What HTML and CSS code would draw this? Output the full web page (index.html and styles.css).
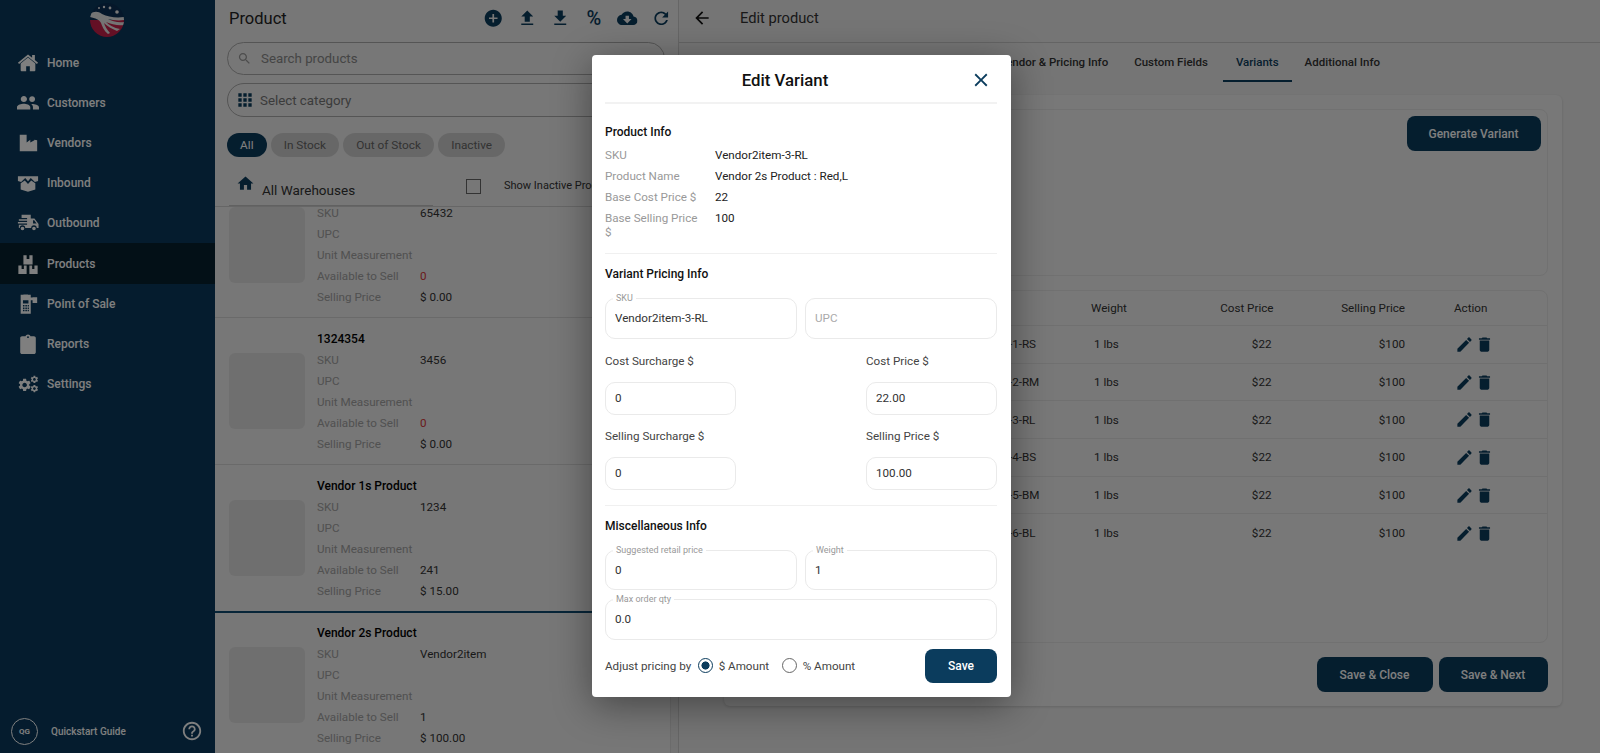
FILE: index.html
```html
<!DOCTYPE html>
<html lang="en">
<head>
<meta charset="utf-8">
<title>Edit product</title>
<link rel="stylesheet" href="styles.css">
</head>
<body>
<svg class="defs" width="0" height="0" aria-hidden="true">
  <symbol id="i-home" viewBox="0 0 24 24"><path d="M12 6 4 12.6V20a1 1 0 0 0 1 1h5v-5.5h4V21h5a1 1 0 0 0 1-1v-7.4zM12 2.6 1 11.6l1.3 1.6L12 5.2l9.7 8 1.3-1.6-3.5-2.9V3.400h-3v2.800z"/></symbol>
  <symbol id="i-people" viewBox="0 0 24 24"><path d="M16.500 11c1.800 0 3.200-1.500 3.200-3.300s-1.400-3.200-3.200-3.200-3.200 1.400-3.200 3.200 1.400 3.300 3.200 3.300zm-9 0c1.900 0 3.400-1.500 3.400-3.300S9.400 4.300 7.500 4.300 4.100 5.800 4.100 7.700 5.600 11 7.500 11zm0 1.800c-2.500 0-7.500 1.200-7.500 3.700V19h14.500v-2.500c0-2.500-4.500-3.700-7-3.700zm9 .2c-.3 0-.7 0-1 .1 1.200.9 1.900 2 1.900 3.400V19H24v-2.500c0-2.300-5-3.500-7.500-3.500z"/></symbol>
  <symbol id="i-factory" viewBox="0 0 24 24"><path d="M3 3h7.500v8.500l4-3v3l4.500-2.500v-.5l3 .4V21H3z"/></symbol>
  <symbol id="i-inbox" viewBox="0 0 24 24"><path d="M1 4.500h22v5.300l-3.500 1-4.500-4.300-3 3.500-3-3.500-4.500 4.300-3.500-1zM4 12.200l4.500-3 3.500 4 3.500-4 4.500 3V19l-8 2.500L4 19z"/></symbol>
  <symbol id="i-truck" viewBox="0 0 24 24"><path d="M5 3h10v4h4l4.500 6v4.500h-2a3 3 0 0 0-6 0H9a3 3 0 0 0-6 0H2V14h9v-1.500H1V11h10V9.500H2V8h9V6.500H5zm1 13a2 2 0 1 1 0 4 2 2 0 0 1 0-4zm12.500 0a2 2 0 1 1 0 4 2 2 0 0 1 0-4zm-1-7v3.500h3.800L18.800 9z"/></symbol>
  <symbol id="i-boxes" viewBox="0 0 24 24"><path d="M7 2.500h3.500v4h3v-4H17v10H7zM1.500 13.500H5v4h2.500v-4h3v9.500h-9zM13.500 13.500h3v4H19v-4h3.500V23h-9z"/></symbol>
  <symbol id="i-pos" viewBox="0 0 24 24"><path d="M4 2h3v-.5h5V2h3v3h2v-.5h5v6.500h-5V8h-2v14.500H4zm2.500 6v3.500h6V8zm0 5v1.700h1.700V13zm2.600 0v1.700h1.700V13zm2.500 0v1.700h1.400V13zm-5.100 2.700v1.700h1.700v-1.700zm2.600 0v1.700h1.700v-1.700zm2.500 0v1.700h1.400v-1.700zm-5.100 2.600V20h1.700v-1.700zm2.600 0V20h1.700v-1.700zm2.500 0V20h1.400v-1.700z" fill-rule="evenodd"/></symbol>
  <symbol id="i-clip" viewBox="0 0 24 24"><path d="M18.500 3.500h-3.800C14.300 2.300 13.300 1.500 12 1.500s-2.300.8-2.700 2H5.500c-1.100 0-2 .9-2 2V21c0 1.100.9 2 2 2h13c1.100 0 2-.9 2-2V5.500c0-1.100-.9-2-2-2zM12 3.500c.5 0 1 .4 1 1s-.5 1-1 1-1-.4-1-1 .5-1 1-1z"/></symbol>
  <symbol id="i-gear" viewBox="0 0 24 24"><path d="M19.140 12.940c.04-.3.06-.61.06-.94 0-.32-.02-.64-.07-.94l2.030-1.580c.18-.14.23-.41.12-.61l-1.920-3.320c-.12-.22-.37-.29-.59-.22l-2.390.96c-.5-.38-1.030-.7-1.620-.94l-.36-2.540c-.04-.24-.24-.41-.48-.41h-3.840c-.24 0-.43.17-.47.41l-.36 2.540c-.59.24-1.130.57-1.620.94l-2.390-.96c-.22-.08-.47 0-.59.22L2.740 8.870c-.12.21-.08.47.12.61l2.030 1.580c-.05.3-.09.63-.09.94s.02.64.07.94l-2.030 1.580c-.18.14-.23.41-.12.61l1.920 3.320c.12.22.37.29.59.22l2.390-.96c.5.38 1.030.7 1.620.94l.36 2.540c.05.24.24.41.48.41h3.840c.24 0 .44-.17.47-.41l.36-2.540c.59-.24 1.130-.56 1.620-.94l2.390.96c.22.08.47 0 .59-.22l1.920-3.320c.12-.22.07-.47-.12-.61l-2.010-1.580zM12 15.600c-1.980 0-3.600-1.620-3.600-3.600s1.620-3.600 3.600-3.600 3.600 1.620 3.600 3.600-1.620 3.600-3.600 3.600z"/></symbol>
  <symbol id="i-gears" viewBox="0 0 36 30"><use href="#i-gear" x="0" y="4" width="25" height="25"/><use href="#i-gear" x="21" y="0" width="15" height="15"/><use href="#i-gear" x="21" y="15" width="15" height="15"/></symbol>
  <symbol id="i-help" viewBox="0 0 24 24"><path d="M11 18h2v-2h-2v2zm1-16C6.480 2 2 6.480 2 12s4.480 10 10 10 10-4.480 10-10S17.520 2 12 2zm0 18c-4.410 0-8-3.590-8-8s3.590-8 8-8 8 3.590 8 8-3.590 8-8 8zm0-14c-2.210 0-4 1.790-4 4h2c0-1.100.9-2 2-2s2 .9 2 2c0 2-3 1.750-3 5h2c0-2.250 3-2.500 3-5 0-2.210-1.790-4-4-4z"/></symbol>
  <symbol id="i-add" viewBox="0 0 24 24"><path d="M12 2C6.480 2 2 6.480 2 12s4.480 10 10 10 10-4.480 10-10S17.520 2 12 2zm5 11h-4v4h-2v-4H7v-2h4V7h2v4h4v2z"/></symbol>
  <symbol id="i-up" viewBox="0 0 24 24"><path d="M9 16h6v-6h4l-7-7-7 7h4zm-4 2h14v2H5z"/></symbol>
  <symbol id="i-down" viewBox="0 0 24 24"><path d="M19 9h-4V3H9v6H5l7 7 7-7zM5 18v2h14v-2H5z"/></symbol>
  <symbol id="i-cloud" viewBox="0 0 24 24"><path d="M19.350 10.040C18.670 6.590 15.640 4 12 4 9.110 4 6.600 5.640 5.350 8.040 2.340 8.360 0 10.910 0 14c0 3.310 2.690 6 6 6h13c2.760 0 5-2.240 5-5 0-2.640-2.050-4.780-4.650-4.960zM17 13l-5 5-5-5h3V9h4v4h3z"/></symbol>
  <symbol id="i-refresh" viewBox="0 0 24 24"><path d="M17.650 6.350C16.200 4.900 14.210 4 12 4c-4.420 0-7.990 3.580-7.990 8s3.570 8 7.990 8c3.730 0 6.840-2.550 7.730-6h-2.080c-.82 2.330-3.040 4-5.650 4-3.310 0-6-2.690-6-6s2.690-6 6-6c1.660 0 3.140.69 4.220 1.780L13 11h7V4l-2.350 2.350z"/></symbol>
  <symbol id="i-search" viewBox="0 0 24 24"><path d="M15.500 14h-.79l-.28-.27C15.410 12.590 16 11.110 16 9.500 16 5.910 13.090 3 9.500 3S3 5.910 3 9.500 5.910 16 9.500 16c1.610 0 3.090-.59 4.230-1.570l.27.28v.79l5 4.990L20.490 19l-4.990-5zm-6 0C7.010 14 5 11.990 5 9.500S7.010 5 9.500 5 14 7.010 14 9.500 11.990 14 9.500 14z"/></symbol>
  <symbol id="i-apps" viewBox="0 0 24 24"><path d="M4 8h4V4H4v4zm6 12h4v-4h-4v4zm-6 0h4v-4H4v4zm0-6h4v-4H4v4zm6 0h4v-4h-4v4zm6-10v4h4V4h-4zm-6 4h4V4h-4v4zm6 6h4v-4h-4v4zm0 6h4v-4h-4v4z"/></symbol>
  <symbol id="i-mhome" viewBox="0 0 24 24"><path d="M10 20v-6h4v6h5v-8h3L12 3 2 12h3v8z"/></symbol>
  <symbol id="i-back" viewBox="0 0 24 24"><path d="M20 11H7.830l5.590-5.590L12 4l-8 8 8 8 1.410-1.410L7.830 13H20v-2z"/></symbol>
  <symbol id="i-close" viewBox="0 0 24 24"><path d="M19 6.410 17.590 5 12 10.590 6.410 5 5 6.410 10.590 12 5 17.590 6.410 19 12 13.410 17.590 19 19 17.590 13.410 12z"/></symbol>
  <symbol id="i-edit" viewBox="0 0 24 24"><path d="M3 17.250V21h3.750L17.810 9.940l-3.750-3.750L3 17.250zM20.710 7.040c.39-.39.39-1.020 0-1.410l-2.340-2.340c-.39-.39-1.020-.39-1.410 0l-1.830 1.830 3.750 3.750 1.830-1.830z"/></symbol>
  <symbol id="i-trash" viewBox="0 0 24 24"><path d="M6 19c0 1.100.9 2 2 2h8c1.100 0 2-.9 2-2V7H6v12zM19 4h-3.500l-1-1h-5l-1 1H5v2h14V4z"/></symbol>
</svg>

<div class="app">
  <aside class="sidebar">
    <div class="logo">
      <svg width="34" height="34" viewBox="0 0 34 34">
        <defs><clipPath id="logo-clip"><circle cx="17" cy="17" r="17"/></clipPath></defs>
        <g clip-path="url(#logo-clip)">
          <rect width="34" height="34" fill="#0a2f55"/>
          <path d="M0 17h34v17H0z" fill="#c8204a"/>
          <path d="M0 11c4-3 8-3 12 0 6 3 14 4 22 3v3c-6 1-12 0-16-1 4 2 10 4 16 3v3c-6 1-13-1-18-3 3 3 8 6 14 7l-3 2c-5-2-10-5-13-8 1 3 3 7 6 10l-2 1c-4-3-6-8-7-11-1-3-6-5-11-6z" fill="#e8e8e8"/>
          <circle cx="9" cy="5" r="1" fill="#eee"/><circle cx="14" cy="4" r="1.200" fill="#eee"/><circle cx="20" cy="5" r="1.400" fill="#eee"/><circle cx="27" cy="9" r="1.800" fill="#eee"/>
        </g>
      </svg>
    </div>
    <nav class="nav">
      <a class="nav-item"><svg class="nav-icon"><use href="#i-home"/></svg><span>Home</span></a>
      <a class="nav-item"><svg class="nav-icon"><use href="#i-people"/></svg><span>Customers</span></a>
      <a class="nav-item"><svg class="nav-icon"><use href="#i-factory"/></svg><span>Vendors</span></a>
      <a class="nav-item"><svg class="nav-icon"><use href="#i-inbox"/></svg><span>Inbound</span></a>
      <a class="nav-item"><svg class="nav-icon"><use href="#i-truck"/></svg><span>Outbound</span></a>
      <a class="nav-item active"><svg class="nav-icon"><use href="#i-boxes"/></svg><span>Products</span></a>
      <a class="nav-item"><svg class="nav-icon"><use href="#i-pos"/></svg><span>Point of Sale</span></a>
      <a class="nav-item"><svg class="nav-icon"><use href="#i-clip"/></svg><span>Reports</span></a>
      <a class="nav-item"><svg class="nav-icon"><use href="#i-gears"/></svg><span>Settings</span></a>
    </nav>
    <div class="quick">
      <span class="qg">QG</span>
      <span class="quick-text">Quickstart Guide</span>
      <svg class="help"><use href="#i-help"/></svg>
    </div>
  </aside>

  <section class="products">
    <header class="prod-head">
      <h1 class="prod-title">Product</h1>
      <div class="prod-actions">
        <svg class="act"><use href="#i-add"/></svg>
        <svg class="act"><use href="#i-up"/></svg>
        <svg class="act"><use href="#i-down"/></svg>
        <span class="act pct">%</span>
        <svg class="act"><use href="#i-cloud"/></svg>
        <svg class="act"><use href="#i-refresh"/></svg>
      </div>
    </header>
    <div class="pill search"><svg class="pill-icon s"><use href="#i-search"/></svg><span>Search products</span></div>
    <div class="pill cat"><svg class="pill-icon a"><use href="#i-apps"/></svg><span>Select category</span></div>
    <div class="chips">
      <span class="chip on">All</span>
      <span class="chip">In Stock</span>
      <span class="chip">Out of Stock</span>
      <span class="chip">Inactive</span>
    </div>
    <div class="wh">
      <svg class="wh-icon"><use href="#i-mhome"/></svg>
      <span class="wh-name">All Warehouses</span>
      <span class="check"></span>
      <span class="wh-inactive">Show Inactive Products</span>
    </div>
    <div class="list">
      <div class="items">
        <article class="item first">
          <div class="thumb"></div>
          <dl class="facts">
            <dt>SKU</dt><dd>65432</dd>
            <dt>UPC</dt><dd></dd>
            <dt>Unit Measurement</dt><dd></dd>
            <dt>Available to Sell</dt><dd class="zero">0</dd>
            <dt>Selling Price</dt><dd>$ 0.00</dd>
          </dl>
        </article>
        <article class="item">
          <div class="thumb"></div>
          <dl class="facts">
            <h2 class="item-name">1324354</h2>
            <dt>SKU</dt><dd>3456</dd>
            <dt>UPC</dt><dd></dd>
            <dt>Unit Measurement</dt><dd></dd>
            <dt>Available to Sell</dt><dd class="zero">0</dd>
            <dt>Selling Price</dt><dd>$ 0.00</dd>
          </dl>
        </article>
        <article class="item">
          <div class="thumb"></div>
          <dl class="facts">
            <h2 class="item-name">Vendor 1s Product</h2>
            <dt>SKU</dt><dd>1234</dd>
            <dt>UPC</dt><dd></dd>
            <dt>Unit Measurement</dt><dd></dd>
            <dt>Available to Sell</dt><dd>241</dd>
            <dt>Selling Price</dt><dd>$ 15.00</dd>
          </dl>
        </article>
        <article class="item selected">
          <div class="thumb"></div>
          <dl class="facts">
            <h2 class="item-name">Vendor 2s Product</h2>
            <dt>SKU</dt><dd>Vendor2item</dd>
            <dt>UPC</dt><dd></dd>
            <dt>Unit Measurement</dt><dd></dd>
            <dt>Available to Sell</dt><dd>1</dd>
            <dt>Selling Price</dt><dd>$ 100.00</dd>
          </dl>
        </article>
      </div>
      <div class="scrollbar"></div>
    </div>
  </section>

  <main class="editor">
    <header class="ed-head">
      <svg class="ed-back"><use href="#i-back"/></svg>
      <span class="ed-title">Edit product</span>
    </header>
    <nav class="tabs">
      <span class="tab">Vendor &amp; Pricing Info</span>
      <span class="tab">Custom Fields</span>
      <span class="tab current">Variants</span>
      <span class="tab">Additional Info</span>
    </nav>
    <div class="card">
      <div class="gen-box"><button class="btn gen">Generate Variant</button></div>
      <div class="table">
        <div class="tr th"><span></span><span>Weight</span><span class="num">Cost Price</span><span class="num">Selling Price</span><span class="action">Action</span></div>
        <div class="tr"><span class="sku">Vendor2item-1-RS</span><span class="wt">1 lbs</span><span class="num money">$22</span><span class="num">$100</span><span class="action"><svg class="ic-edit"><use href="#i-edit"/></svg><svg class="ic-trash"><use href="#i-trash"/></svg></span></div>
        <div class="tr"><span class="sku">Vendor2item-2-RM</span><span class="wt">1 lbs</span><span class="num money">$22</span><span class="num">$100</span><span class="action"><svg class="ic-edit"><use href="#i-edit"/></svg><svg class="ic-trash"><use href="#i-trash"/></svg></span></div>
        <div class="tr"><span class="sku">Vendor2item-3-RL</span><span class="wt">1 lbs</span><span class="num money">$22</span><span class="num">$100</span><span class="action"><svg class="ic-edit"><use href="#i-edit"/></svg><svg class="ic-trash"><use href="#i-trash"/></svg></span></div>
        <div class="tr"><span class="sku">Vendor2item-4-BS</span><span class="wt">1 lbs</span><span class="num money">$22</span><span class="num">$100</span><span class="action"><svg class="ic-edit"><use href="#i-edit"/></svg><svg class="ic-trash"><use href="#i-trash"/></svg></span></div>
        <div class="tr"><span class="sku">Vendor2item-5-BM</span><span class="wt">1 lbs</span><span class="num money">$22</span><span class="num">$100</span><span class="action"><svg class="ic-edit"><use href="#i-edit"/></svg><svg class="ic-trash"><use href="#i-trash"/></svg></span></div>
        <div class="tr last"><span class="sku">Vendor2item-6-BL</span><span class="wt">1 lbs</span><span class="num money">$22</span><span class="num">$100</span><span class="action"><svg class="ic-edit"><use href="#i-edit"/></svg><svg class="ic-trash"><use href="#i-trash"/></svg></span></div>
      </div>
      <div class="card-foot">
        <button class="btn close">Save &amp; Close</button>
        <button class="btn next">Save &amp; Next</button>
      </div>
    </div>
  </main>
</div>

<div class="backdrop"></div>

<div class="modal" role="dialog" aria-label="Edit Variant">
  <header class="m-head">
    <h2 class="m-title">Edit Variant</h2>
    <svg class="m-close"><use href="#i-close"/></svg>
  </header>

  <h3 class="m-sect first-sect">Product Info</h3>
  <dl class="m-info">
    <dt>SKU</dt><dd>Vendor2item-3-RL</dd>
    <dt>Product Name</dt><dd>Vendor 2s Product : Red,L</dd>
    <dt>Base Cost Price $</dt><dd>22</dd>
    <dt>Base Selling Price $</dt><dd>100</dd>
  </dl>
  <hr class="m-rule info-rule">

  <h3 class="m-sect">Variant Pricing Info</h3>
  <div class="pair top-pair">
    <div class="field"><label class="float">SKU</label><input value="Vendor2item-3-RL"></div>
    <div class="field"><input placeholder="UPC"></div>
  </div>
  <div class="split cost-labels"><label>Cost Surcharge $</label><label>Cost Price $</label></div>
  <div class="split">
    <div class="field short"><input value="0"></div>
    <div class="field short"><input value="22.00"></div>
  </div>
  <div class="split cost-labels"><label>Selling Surcharge $</label><label>Selling Price $</label></div>
  <div class="split">
    <div class="field short"><input value="0"></div>
    <div class="field short"><input value="100.00"></div>
  </div>
  <hr class="m-rule misc-rule">

  <h3 class="m-sect">Miscellaneous Info</h3>
  <div class="pair top-pair">
    <div class="field misc"><label class="float">Suggested retail price</label><input value="0"></div>
    <div class="field misc"><label class="float">Weight</label><input value="1"></div>
  </div>
  <div class="field wide"><label class="float">Max order qty</label><input value="0.0"></div>

  <footer class="m-foot">
    <span class="adj">Adjust pricing by</span>
    <span class="radio on"></span><span class="r-label">$ Amount</span>
    <span class="radio"></span><span class="r-label">% Amount</span>
    <button class="btn save">Save</button>
  </footer>
</div>
</body>
</html>
```

FILE: styles.css
```css
* { box-sizing: border-box; }
html, body { margin: 0; height: 753px; overflow: hidden; }
body { font-family: Roboto, "Liberation Sans", sans-serif; font-size: 11.650px; color: #222; position: relative; background: #eee; }
.defs { position: absolute; }
svg { fill: currentColor; display: block; }

.app { display: flex; height: 753px; }

/* sidebar */
.sidebar { width: 215px; flex: none; background: #0a395c; color: #fff; display: flex; flex-direction: column; }
.logo { height: 42.500px; display: flex; justify-content: center; padding-top: 3px; margin-left: -1px; }
.nav { display: flex; flex-direction: column; }
.nav-item { height: 40.200px; display: flex; align-items: center; font-size: 12px; font-weight: 500; color: #fff; padding-left: 17px; }
.nav-item.active { background: #07202f; }
.nav-icon { width: 22px; height: 22px; margin-right: 8px; flex: none; }
.quick { margin-top: auto; height: 42px; margin-bottom: 1px; display: flex; align-items: center; padding-left: 11px; color: #fff; }
.qg { width: 27px; height: 27px; border: 1px solid #fff; border-radius: 50%; font-size: 8px; font-weight: 700; display: flex; align-items: center; justify-content: center; margin-right: 13px; flex: none; }
.quick-text { font-size: 10px; font-weight: 500; }
.help { width: 22px; height: 22px; margin-left: auto; margin-right: 12px; }

/* product list */
.products { width: 464px; flex: none; background: #eeeeee; border-right: 1px solid #ccc; display: flex; flex-direction: column; }
.prod-head { height: 36px; padding: 0 7px 0 14px; display: flex; align-items: center; justify-content: space-between; }
.prod-title { margin: 0; font-size: 16.500px; font-weight: 400; color: #222; }
.prod-actions { display: flex; align-items: center; gap: 13px; color: #0b3c5d; }
.act { width: 20.500px; height: 20.500px; }
.pct { font-size: 20px; font-weight: 500; text-align: center; line-height: 20px; }
.pill { margin: 6px 13px 0 12px; border: 1px solid #aaa; border-radius: 17px; height: 33px; display: flex; align-items: center; font-size: 13.300px; color: #8a8a8a; }
.pill.cat { margin-top: 8px; height: 34px; color: #777; }
.pill-icon { flex: none; }
.pill-icon.s { width: 15px; height: 15px; margin: 0 9px 0 9px; color: #999; }
.pill-icon.a { width: 20px; height: 20px; margin: 0 5px 0 7px; color: #0b3c5d; }
.chips { display: flex; gap: 4px; margin: 16px 0 0 12px; }
.chip { height: 24px; padding: 0 13.100px; border-radius: 12px; background: #cfcfcf; color: #666; font-size: 11.800px; display: flex; align-items: center; }
.chip.on { background: #0b3c5d; color: #fff; }
.wh { height: 36px; margin: 13px 0 0 14px; display: flex; align-items: center; border-bottom: 1px solid #c2c2c2; width: 204px; flex: none; position: relative; white-space: nowrap; }
.wh-icon { width: 19px; height: 19px; color: #0b3c5d; margin: -8px 7px 0 7px; flex: none; }
.wh-name { font-size: 13.500px; color: #333; margin-top: 4px; }
.check { position: absolute; left: 237px; top: 9px; width: 15px; height: 15px; border: 1.500px solid #666; }
.wh-inactive { position: absolute; left: 275px; top: 9px; font-size: 11px; color: #333; }
.list { flex: 1; min-height: 0; display: flex; overflow: hidden; border-top: 1px solid #ccc; }
.items { flex: 1; min-width: 0; }
.scrollbar { width: 9px; flex: none; background: #e6e6e6; border-left: 1px solid #d8d8d8; margin-right: -1px; }
.item { height: 147px; border-bottom: 1px solid #d4d4d4; display: flex; align-items: center; padding-left: 14px; }
.item.first { height: 111px; align-items: flex-start; }
.item.first .facts { margin-top: -4.500px; }
.item.selected { border-top: 2px solid #0f4a70; margin-top: -1px; }
.thumb { width: 76px; height: 76px; background: #dfdfdf; border-radius: 6px; flex: none; margin-right: 12px; }
.facts { margin: 0; display: grid; grid-template-columns: 103px 1fr; grid-auto-rows: 21px; align-items: center; flex: 1; }
.facts dt { color: #a2a2a2; }
.facts dd { margin: 0; color: #333; }
.facts dd.zero { color: #d63a3a; }
.item-name { grid-column: 1 / -1; margin: 0; font-size: 12px; font-weight: 500; color: #000; }

/* editor */
.editor { flex: 1; min-width: 0; background: #ebebeb; display: flex; flex-direction: column; }
.ed-head { height: 43px; flex: none; border-bottom: 1px solid #c8c8c8; display: flex; align-items: center; padding-left: 13px; padding-bottom: 6px; color: #222; }
.ed-back { width: 20px; height: 20px; margin-right: 28px; color: #111; }
.ed-title { font-size: 14.700px; color: #333; }
.tabs { height: 39px; flex: none; display: flex; padding-left: 307px; }
.tab { padding: 0 13px; display: flex; align-items: center; font-size: 11.500px; font-weight: 500; color: #333; border-bottom: 2px solid transparent; white-space: nowrap; }
.tab.current { color: #0b3c5d; border-bottom-color: #0b3c5d; margin-left: 2px; }
.card { width: 838px; height: 611px; margin: 13px 0 0 44.500px; background: #f0f0f0; border-radius: 6px; padding: 14px 14px 0 12px; box-shadow: 0 1px 3px rgba(0,0,0,.15); flex: none; }
.gen-box { height: 167px; border: 1px solid #e2e2e2; border-radius: 8px; padding: 6px; display: flex; justify-content: flex-end; align-items: flex-start; }
.btn { border: none; background: #0b3c5d; color: #fff; font-family: inherit; font-size: 12px; font-weight: 500; border-radius: 8px; height: 35px; padding: 0; }
.gen { width: 134px; }
.table { height: 353px; margin-top: 14px; border: 1px solid #e2e2e2; border-radius: 8px; }
.tr { height: 37.700px; display: grid; grid-template-columns: 354.500px 100px 82.500px 131.500px 1fr; align-items: center; border-bottom: 1px solid #e0e0e0; color: #333; white-space: nowrap; }
.tr.th { height: 35px; }
.tr.last { border-bottom: none; }
.sku { padding-left: 206px; }
.wt { padding-left: 3px; }
.num { text-align: right; }
.money { padding-right: 2px; }
.action { padding-left: 49px; display: flex; align-items: center; color: #0b3c5d; }
.th .action { color: #333; }
.ic-edit { width: 19px; height: 19px; margin-left: 1px; }
.ic-trash { width: 19px; height: 19px; margin-left: 1px; }
.card-foot { display: flex; justify-content: flex-end; gap: 6px; margin-top: 14px; }
.close { width: 116px; }
.next { width: 109px; }

/* overlay */
.backdrop { position: absolute; inset: 0; background: rgba(0,0,0,.5); }
.modal { position: absolute; left: 592px; top: 55px; width: 419px; height: 642px; background: #fff; border-radius: 4px; padding: 0 14px 0 13px; box-shadow: 0 8px 38px rgba(0,0,0,.42); }
.m-head { height: 49px; border-bottom: 2px solid #f2f2f2; display: flex; align-items: center; justify-content: center; padding: 2px 32px 0 0; position: relative; }
.m-title { margin: 0; font-size: 16.800px; font-weight: 500; color: #111; }
.m-close { position: absolute; right: 5.500px; top: 14px; width: 22px; height: 22px; color: #0b3c5d; }
.m-sect { margin: 12px 0 0; font-size: 12px; line-height: 16px; font-weight: 500; color: #111; }
.m-sect.first-sect { margin-top: 20px; }
.m-info { margin: 4.500px 0 0; display: grid; grid-template-columns: 110px 1fr; }
.m-info dt { color: #999; line-height: 14px; padding: 3.500px 10px 3.500px 0; }
.m-info dd { margin: 0; color: #222; line-height: 14px; padding: 3.500px 0; }
.m-rule { border: none; border-top: 1.500px solid #f0f0f0; margin: 0; }
.info-rule { margin-top: 10px; }
.misc-rule { margin-top: 15px; }
.pair { display: grid; grid-template-columns: 192px 192px; gap: 8px; }
.top-pair { margin-top: 16px; }
.split { display: flex; justify-content: space-between; }
.cost-labels { margin-top: 14px; margin-bottom: 13px; line-height: 16px; color: #444; }
.cost-labels label:last-child { width: 131px; }
.split + .cost-labels { margin-top: 13px; }
.field { position: relative; height: 41px; border: 1px solid #eaeaea; border-radius: 10px; }
.field input { width: 100%; height: 100%; border: none; outline: none; background: transparent; font: inherit; color: #333; padding: 0 9px; }
.field input::placeholder { color: #aaa; }
.field.short { width: 131px; height: 33px; }
.field.misc { height: 40px; }
.field.wide { height: 41px; margin-top: 9px; }
.float { position: absolute; left: 7px; top: -6px; background: #fff; padding: 0 3px; font-size: 9px; line-height: 11px; color: #999; }
.m-foot { margin-top: 9px; display: flex; align-items: center; color: #444; }
.adj { margin-right: 7px; }
.radio { width: 15px; height: 15px; border: 1.500px solid #666; border-radius: 50%; flex: none; }
.radio.on { border-color: #0b3c5d; background: radial-gradient(circle, #0b3c5d 0 3.800px, #fff 4.300px); }
.r-label { margin: 0 13px 0 5.500px; }
.save { margin-left: auto; width: 72px; height: 34px; }
```
